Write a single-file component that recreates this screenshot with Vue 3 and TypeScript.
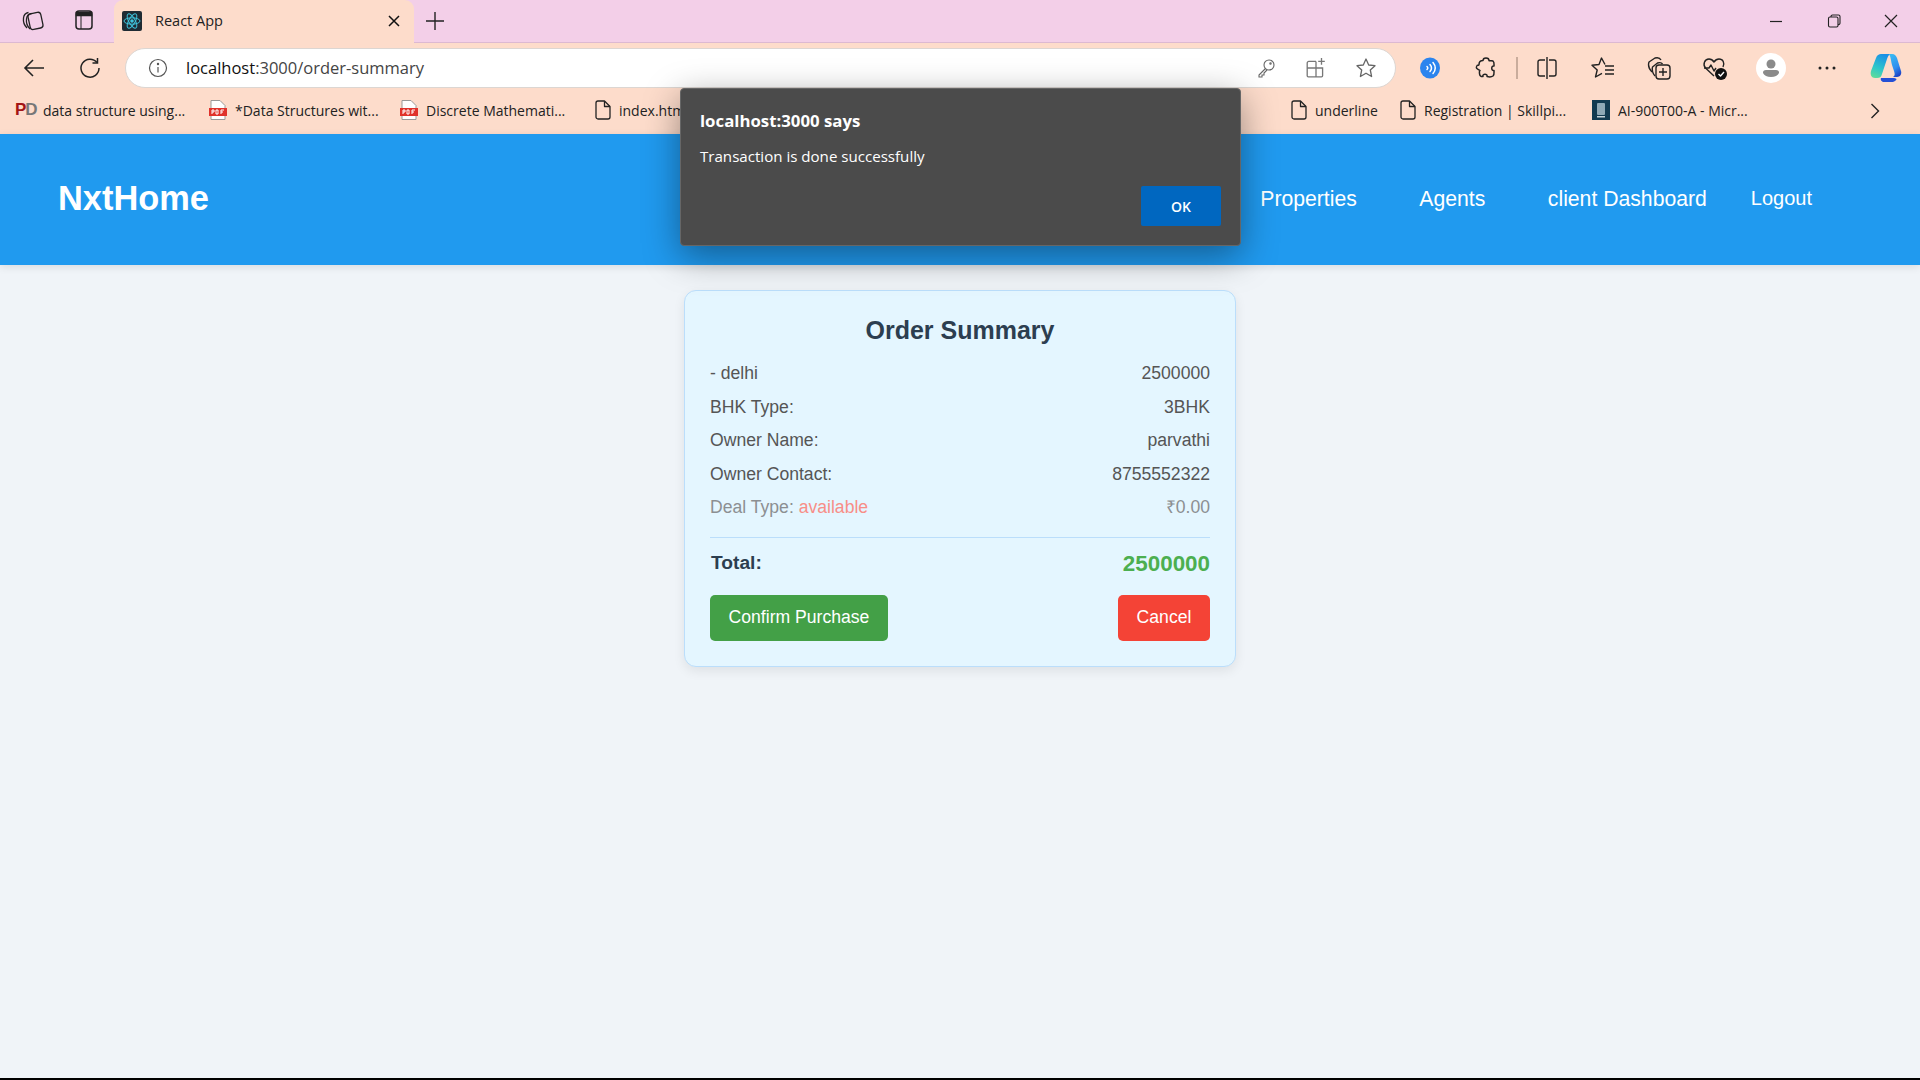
<script setup lang="ts">
type Bookmark = { label: string; icon: 'pd' | 'pdf' | 'file' | 'ai'; width: number }
type Row = { left: string; right: string }

const bookmarks: Bookmark[] = [
  { label: 'data structure using...', icon: 'pd', width: 194 },
  { label: '*Data Structures wit...', icon: 'pdf', width: 191 },
  { label: 'Discrete Mathemati...', icon: 'pdf', width: 195 },
  { label: 'index.html', icon: 'file', width: 110 },
  { label: 'Introduction to Pro...', icon: 'file', width: 586 },
  { label: 'underline', icon: 'file', width: 109 },
  { label: 'Registration | Skillpi...', icon: 'file', width: 192 },
  { label: 'AI-900T00-A - Micr...', icon: 'ai', width: 270 }
]

const rows: Row[] = [
  { left: '- delhi', right: '2500000' },
  { left: 'BHK Type:', right: '3BHK' },
  { left: 'Owner Name:', right: 'parvathi' },
  { left: 'Owner Contact:', right: '8755552322' }
]

const navLinks = ['Properties', 'Agents', 'client Dashboard']
</script>

<template>
  <div class="screen">
    <div class="tabstrip">
      <div class="strip-btn">
        <svg width="24" height="24" viewBox="0 0 24 24" fill="none" stroke="#222" stroke-width="1.3">
          <rect x="9" y="5" width="13" height="16" rx="3" transform="rotate(-12 15 13)" fill="#f3cfe8" />
          <path d="M7 20C4 17 3 14 3.500 10c.3-3 2-5 5-5.500" />
          <path d="M10 21C7 18 6 15 6.500 11c.3-3 2-5 5-5.500" />
        </svg>
      </div>
      <div class="strip-btn">
        <svg width="20" height="22" viewBox="0 0 20 22" fill="none" stroke="#222" stroke-width="1.500">
          <rect x="2" y="2" width="16" height="18" rx="3" />
          <path d="M2.500 3.500h15v3h-15z" fill="#222" />
          <path d="M7 6v14" stroke-width="1" />
        </svg>
      </div>
      <div class="tab">
        <svg class="favicon" width="20" height="20" viewBox="0 0 20 20" fill="none" stroke="#3fc4dc" stroke-width="1">
          <rect width="20" height="20" rx="2" fill="#1f2b33" stroke="none" />
          <circle cx="10" cy="10" r="1.800" fill="#3fc4dc" stroke="none" />
          <ellipse cx="10" cy="10" rx="8" ry="3.200" />
          <ellipse cx="10" cy="10" rx="8" ry="3.200" transform="rotate(60 10 10)" />
          <ellipse cx="10" cy="10" rx="8" ry="3.200" transform="rotate(120 10 10)" />
        </svg>
        <span class="tab-title">React App</span>
        <svg class="tab-close" width="12" height="12" viewBox="0 0 12 12" stroke="#111" stroke-width="1.500">
          <path d="M1 1l10 10M11 1L1 11" />
        </svg>
      </div>
      <div class="new-tab">
        <svg width="18" height="18" viewBox="0 0 18 18" stroke="#222" stroke-width="1.400"><path d="M9 0v18M0 9h18" /></svg>
      </div>
      <div class="spacer"></div>
      <div class="win-btn">
        <svg width="14" height="14" viewBox="0 0 14 14" stroke="#222" stroke-width="1.200"><path d="M1 7.500h12" /></svg>
      </div>
      <div class="win-btn">
        <svg width="14" height="14" viewBox="0 0 14 14" fill="none" stroke="#222" stroke-width="1.100">
          <rect x="1.500" y="3" width="9.500" height="10" rx="1.500" />
          <path d="M4 3V2.500A1.500 1.500 0 0 1 5.500 1h6A1.500 1.500 0 0 1 13 2.500v6.500a1.500 1.500 0 0 1-2 1.500" />
        </svg>
      </div>
      <div class="win-btn">
        <svg width="14" height="14" viewBox="0 0 14 14" stroke="#222" stroke-width="1.200"><path d="M1 1l12 12M13 1L1 13" /></svg>
      </div>
    </div>

    <div class="toolbar">
      <div class="tool-btn first">
        <svg width="22" height="20" viewBox="0 0 22 20" fill="none" stroke="#222" stroke-width="1.600"><path d="M21 10H2M10 2l-8 8 8 8" /></svg>
      </div>
      <div class="tool-btn second">
        <svg width="22" height="22" viewBox="0 0 22 22" fill="none" stroke="#222" stroke-width="1.500">
          <path d="M18 5.500A9 9 0 1 0 20 11" />
          <path d="M18.500 1v5h-5" />
        </svg>
      </div>
      <div class="address">
        <svg class="info" width="20" height="20" viewBox="0 0 20 20" fill="none" stroke="#555" stroke-width="1.200">
          <circle cx="10" cy="10" r="8.500" />
          <path d="M10 9v5.500" />
          <circle cx="10" cy="6" r=".6" fill="#555" />
        </svg>
        <span class="url"><span class="host">localhost</span>:3000/order-summary</span>
        <div class="spacer"></div>
        <div class="addr-icon">
          <svg width="20" height="20" viewBox="0 0 20 20" fill="none" stroke="#666" stroke-width="1.100">
            <circle cx="13" cy="7" r="5" />
            <path d="M9.500 10.500L3 17v2h3v-2h2v-2l3-3" />
            <circle cx="14.500" cy="5.500" r=".7" />
          </svg>
        </div>
        <div class="addr-icon">
          <svg width="22" height="22" viewBox="0 0 20 20" fill="none" stroke="#777" stroke-width="1.200">
            <path d="M10 4H3.500A1.500 1.500 0 0 0 2 5.500V17a1 1 0 0 0 1 1h12a1 1 0 0 0 1-1v-7H2M10 4v14" />
            <path d="M15 1v6M12 4h6" />
          </svg>
        </div>
        <div class="addr-icon">
          <svg width="22" height="22" viewBox="0 0 22 22" fill="none" stroke="#666" stroke-width="1.300" stroke-linejoin="round">
            <path d="M11 2l2.700 6 6.300.7-4.700 4.300 1.300 6.500L11 16.200 5.400 19.500l1.300-6.500L2 8.700 8.300 8z" />
          </svg>
        </div>
      </div>
      <div class="tool-icons">
        <div class="tool-slot">
          <svg width="22" height="24" viewBox="0 0 22 24" fill="none" stroke="#fff" stroke-width="1.500" stroke-linecap="round">
            <ellipse cx="11" cy="12" rx="10" ry="10.500" fill="#2b84ee" stroke="none" />
            <path d="M8 10.500q1.500 1.500 0 3M11 8.500q3 3.500 0 7M14 6.500q4.500 5.500 0 11" />
          </svg>
        </div>
        <div class="tool-slot">
          <svg width="22" height="24" viewBox="0 0 22 24" fill="none" stroke="#222" stroke-width="1.500" stroke-linejoin="round">
            <path d="M8 4.500C8 1 14 1 14 4.500c0 1 2-.5 4 .5 1.500 1 1 3.500 1 5-3-1-3 5.500 0 4.500 0 2 .5 4-1 5.500-1.500 1-4 1-6 .5 1-3-5-3-4 0-2 .5-3.500-1-3.500-3 0-1.500-.5-2 .5-3C3 13 0 13 2 9.500c.5-1 2 .5 2-1 0-2 1-4 4-4z" />
          </svg>
        </div>
        <div class="tool-sep"></div>
        <div class="tool-slot">
          <svg width="20" height="22" viewBox="0 0 20 22" fill="none" stroke="#222" stroke-width="1.400">
            <path d="M8 3H3a2 2 0 0 0-2 2v12a2 2 0 0 0 2 2h5M12 3h5a2 2 0 0 1 2 2v12a2 2 0 0 1-2 2h-5M10 0v22" />
          </svg>
        </div>
        <div class="tool-slot">
          <svg width="24" height="22" viewBox="0 0 24 22" fill="none" stroke="#222" stroke-width="1.400" stroke-linejoin="round">
            <path d="M14 7.500L10.500 1 8 7.500l-7 .7 5.200 4.800L4.500 20l6.500-3.700" />
            <path d="M14 9h9M14 13h9M14 17h9" />
          </svg>
        </div>
        <div class="tool-slot">
          <svg width="24" height="24" viewBox="0 0 24 24" fill="none" stroke="#222" stroke-width="1.400" stroke-linejoin="round">
            <path d="M5 16C2 13 1 9 2 6l6-4c3-.8 5 0 6 2" />
            <path d="M8 20c-2-2-3.500-6-2.500-9l5-4c1.500-.5 4-.5 5 1" />
            <rect x="9" y="9" width="14" height="14" rx="3" />
            <path d="M16 12v8M12 16h8" />
          </svg>
        </div>
        <div class="tool-slot">
          <svg width="26" height="26" viewBox="0 0 26 26" fill="none" stroke="#222" stroke-width="1.400" stroke-linejoin="round">
            <path d="M12 21L3.500 13C.5 9.500 2.500 4 7 4c2.500 0 4 1.500 5 3 1-1.500 2.500-3 5-3 4 0 6 4 4 8" />
            <path d="M2 13h5l2-3 3 6 2-3" />
            <circle cx="19" cy="19" r="6" fill="#111" stroke="none" />
            <path d="M16.500 19l2 2 3.500-4" stroke="#fff" />
          </svg>
        </div>
        <div class="tool-slot">
          <svg width="30" height="30" viewBox="0 0 30 30">
            <circle cx="15" cy="15" r="15" fill="#fff" />
            <circle cx="15" cy="11" r="4.500" fill="#8a8a8a" />
            <path d="M7 19.500q0-2.500 3-2.500h10q3 0 3 2.500v.5q-2 4-8 4t-8-4z" fill="#8a8a8a" />
          </svg>
        </div>
        <div class="tool-slot dots">
          <svg width="18" height="4" viewBox="0 0 18 4" fill="#222">
            <circle cx="2" cy="2" r="1.500" /><circle cx="9" cy="2" r="1.500" /><circle cx="16" cy="2" r="1.500" />
          </svg>
        </div>
        <div class="tool-slot copilot">
          <svg width="32" height="30" viewBox="0 0 32 30">
            <defs>
              <linearGradient id="cpA" x1="0.600" y1="0" x2="0.200" y2="1">
                <stop offset="0" stop-color="#1a8fe6" />
                <stop offset="0.600" stop-color="#2fc7c9" />
                <stop offset="1" stop-color="#5fdc9a" />
              </linearGradient>
              <linearGradient id="cpB" x1="0.300" y1="0" x2="0.700" y2="1">
                <stop offset="0" stop-color="#38b8f2" />
                <stop offset="0.600" stop-color="#2f8df0" />
                <stop offset="1" stop-color="#1c3fc4" />
              </linearGradient>
            </defs>
            <path d="M11 1h10c-2 .5-3 2-4 5L12 21c-1 3-2 4-5 4H5C1.500 25 0 22 1 18L6 5c1-3 3-4 5-4z" fill="url(#cpA)" />
            <path d="M19 1h3c3 0 4 2 5 4l4 13c1 3-1 6-4 6h-4c2-1 2-3 1-6l-2-6c-1-3-1-8-3-11z" fill="url(#cpB)" />
            <path d="M11 25h12c3 0 5 1 2 3-1 1-3 1-5 1h-6c-2 0-4-2-3-4z" fill="#2450d6" />
          </svg>
        </div>
      </div>
    </div>

    <div class="bookmarks">
      <div v-for="b in bookmarks" :key="b.label" class="bookmark" :style="{ width: b.width + 'px' }">
        <span v-if="b.icon === 'pd'" class="pd"><b class="pd-p">P</b><b class="pd-d">D</b></span>
        <svg v-else-if="b.icon === 'pdf'" width="18" height="20" viewBox="0 0 18 20">
          <path d="M2 0.500h9l5 5V19.500H2z" fill="#fff" stroke="#999" />
          <rect x="0" y="8" width="18" height="8" fill="#e0322b" />
          <path d="M3 10v4M3 10h2v2H3M7 10v4h2v-4zM12 10v4M12 10h3M12 12h2" stroke="#fff" fill="none" stroke-width="1" />
        </svg>
        <svg v-else-if="b.icon === 'file'" width="16" height="20" viewBox="0 0 16 20" fill="none" stroke="#222" stroke-width="1.300" stroke-linejoin="round">
          <path d="M3 1h6.500L15 6.500V17a2 2 0 0 1-2 2H3a2 2 0 0 1-2-2V3a2 2 0 0 1 2-2z" />
          <path d="M9.500 1v5.500H15" />
        </svg>
        <svg v-else width="18" height="20" viewBox="0 0 18 20">
          <rect width="18" height="20" fill="#123a50" />
          <rect x="5" y="3" width="8" height="12" rx="1" fill="#8fa8b5" />
          <rect x="5" y="16" width="8" height="1.500" fill="#c7d3d9" />
        </svg>
        <span class="bm-label">{{ b.label }}</span>
      </div>
      <div class="spacer"></div>
      <svg class="bm-more" width="10" height="16" viewBox="0 0 10 16" fill="none" stroke="#222" stroke-width="1.400"><path d="M1.500 1l7 7-7 7" /></svg>
    </div>

    <header class="nav">
      <span class="logo">NxtHome</span>
      <div class="spacer"></div>
      <a v-for="link in navLinks" :key="link" class="nav-link">{{ link }}</a>
      <button class="logout">Logout</button>
    </header>

    <main class="page">
      <section class="card">
        <h2 class="card-title">Order Summary</h2>
        <div v-for="r in rows" :key="r.left" class="row">
          <span>{{ r.left }}</span>
          <span>{{ r.right }}</span>
        </div>
        <div class="row deal">
          <span class="faded">Deal Type: <span class="avail">available</span></span>
          <span class="faded">₹0.00</span>
        </div>
        <div class="total">
          <strong class="total-label">Total:</strong>
          <strong class="total-value">2500000</strong>
        </div>
        <div class="actions">
          <button class="confirm">Confirm Purchase</button>
          <button class="cancel">Cancel</button>
        </div>
      </section>
    </main>
    <div class="bottom-line"></div>

    <div class="alert">
      <div class="alert-title">localhost:3000 says</div>
      <div class="alert-msg">Transaction is done successfully</div>
      <div class="alert-foot">
        <button class="alert-ok">OK</button>
      </div>
    </div>
  </div>
</template>

<style>
html, body { margin: 0; padding: 0; }
</style>

<style scoped>
.screen {
  position: relative;
  width: 1920px;
  height: 1080px;
  overflow: hidden;
  display: flex;
  flex-direction: column;
  background: #f0f4f8;
  font-family: "Liberation Sans", Arial, sans-serif;
}
.spacer { flex: 1; }

.tabstrip {
  height: 42px;
  display: flex;
  align-items: center;
  padding-left: 6px;
  background: #f3cfe8;
  border-bottom: 1px solid #dcb9d2;
  font-family: "Open Sans", sans-serif;
  flex-shrink: 0;
}
.strip-btn { width: 52px; display: flex; justify-content: center; padding-bottom: 2px; }
.tab {
  width: 300px;
  height: 43px;
  margin: 0 0 -1px 4px;
  box-sizing: border-box;
  padding: 0 14px 2px 8px;
  background: #fddccb;
  border-radius: 9px 9px 0 0;
  display: flex;
  align-items: center;
  color: #222;
}
.tab-title { margin-left: 13px; font-size: 14.500px; flex: 1; }
.new-tab { width: 42px; display: flex; justify-content: center; }
.win-btn { width: 57.500px; display: flex; justify-content: center; }

.toolbar {
  height: 47px;
  box-sizing: border-box;
  padding: 3px 0 0 12px;
  display: flex;
  align-items: center;
  background: #fddccb;
  flex-shrink: 0;
  font-family: "Open Sans", sans-serif;
}
.tool-btn { width: 44px; display: flex; justify-content: center; }
.second { margin-left: 12px; }
.address {
  width: 1271px;
  height: 40px;
  margin-left: 13px;
  box-sizing: border-box;
  padding: 0 4px 0 22px;
  display: flex;
  align-items: center;
  background: #fff;
  border: 1px solid #dcd6d2;
  border-radius: 20px;
}
.url { margin: 0 0 2px 18px; font-size: 16.500px; color: #444; }
.host { color: #111; }
.addr-icon { width: 50px; display: flex; justify-content: center; }
.tool-icons { display: flex; align-items: center; margin-left: 6px; }
.tool-slot { width: 56px; display: flex; justify-content: center; }
.tool-sep { width: 2px; height: 22px; margin: 0 1.500px; background: #c9ac9c; }
.copilot { margin-left: 3px; }

.bookmarks {
  height: 44px;
  box-sizing: border-box;
  padding: 0 40px 4px 15px;
  display: flex;
  align-items: center;
  background: #fddccb;
  font-family: "Open Sans", sans-serif;
  font-size: 14px;
  color: #222;
  flex-shrink: 0;
}
.bookmark { display: flex; align-items: center; gap: 8px; flex-shrink: 0; }
.bm-label { white-space: nowrap; }
.pd { width: 20px; font: bold 17px/20px "Liberation Sans", sans-serif; letter-spacing: -1px; }
.pd-p { color: #a31515; }
.pd-d { color: #777; }
.bm-more { margin-top: 1px; }

.nav {
  height: 131px;
  box-sizing: border-box;
  padding: 0 108px 2px 58px;
  display: flex;
  align-items: center;
  background: #209aef;
  box-shadow: 0 2px 8px rgba(0, 0, 0, 0.1);
  color: #fff;
  flex-shrink: 0;
}
.logo { font-size: 34.400px; font-weight: 700; }
.nav-link { font-size: 21.200px; margin-right: 62.500px; }
.nav-link:last-of-type { margin-right: 44px; }
.logout {
  padding: 0;
  background: none;
  border: none;
  color: #fff;
  font: 20px "Liberation Sans", sans-serif;
  margin-bottom: 1px;
}

.page { flex: 1; display: flex; justify-content: center; padding-top: 25px; }
.card {
  width: 552px;
  height: 377px;
  box-sizing: border-box;
  padding: 25px;
  background: #e4f6ff;
  border: 1px solid #bbdefb;
  border-radius: 12px;
  box-shadow: 0 4px 12px rgba(0, 0, 0, 0.08);
}
.card-title {
  margin: -1px 0 12px;
  text-align: center;
  font-size: 25px;
  line-height: 30px;
  color: #2c3e50;
}
.row {
  display: flex;
  justify-content: space-between;
  height: 33.500px;
  line-height: 33.500px;
  font-size: 17.600px;
  color: #555;
}
.faded { color: #8c8f92; }
.avail { color: #f88e87; }
.total {
  display: flex;
  justify-content: space-between;
  align-items: center;
  height: 52px;
  margin-top: 12px;
  border-top: 1px solid #bbdefb;
}
.total-label { font-size: 19.200px; color: #2c3e50; margin: 0 0 2px 1px; }
.total-value { font-size: 22.400px; color: #4caf50; }
.actions { display: flex; justify-content: space-between; margin-top: 5px; }
.confirm, .cancel {
  height: 46px;
  border: none;
  border-radius: 5px;
  color: #fff;
  font: 17.600px "Liberation Sans", sans-serif;
}
.confirm { width: 178px; background: #43a047; }
.cancel { width: 92px; background: #f44336; }

.bottom-line { height: 2px; background: #000; flex-shrink: 0; }

.alert {
  position: absolute;
  left: 680px;
  top: 88px;
  width: 561px;
  height: 158px;
  box-sizing: border-box;
  padding: 21px 19px 0;
  background: #4b4b4b;
  border: 1px solid #666;
  border-radius: 4px;
  box-shadow: 0 10px 36px rgba(0, 0, 0, 0.4);
  color: #fff;
  font-family: "Open Sans", sans-serif;
}
.alert-title { font-size: 16.800px; font-weight: 700; line-height: 22px; }
.alert-msg { font-size: 15.100px; line-height: 20px; margin-top: 14px; }
.alert-foot { display: flex; justify-content: flex-end; margin-top: 20px; }
.alert-ok {
  width: 80px;
  height: 40px;
  border: none;
  border-radius: 2px;
  background: #0067c0;
  color: #fff;
  font: 600 14px "Open Sans", sans-serif;
}
</style>
